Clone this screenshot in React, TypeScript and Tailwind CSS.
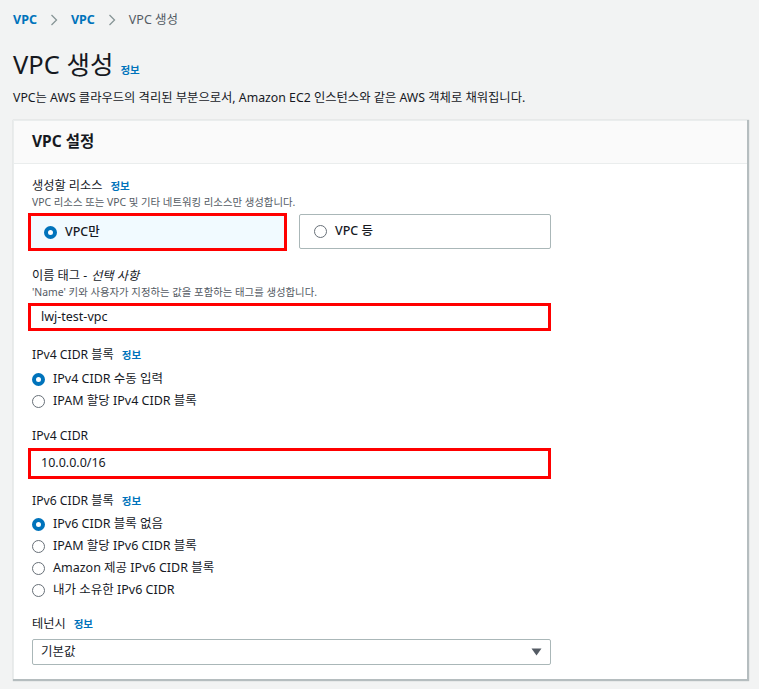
const font = { fontFamily: '"Noto Sans", "Noto Sans CJK KR", sans-serif' };

function Info() {
    return <span className="text-[#0073bb] text-[10.5px] font-bold ml-2">정보</span>;
}

function Radio({ checked }: { checked?: boolean }) {
    return checked ? (
        <span className="w-[13px] h-[13px] rounded-full border-[4px] border-[#0073bb] bg-white shrink-0" />
    ) : (
        <span className="w-[13px] h-[13px] rounded-full border border-[#687078] bg-white shrink-0" />
    );
}

function RadioRow({ label, checked }: { label: string; checked?: boolean }) {
    return (
        <div className="flex items-center gap-[8px] h-[22px] text-[12.5px] text-[#16191f]">
            <Radio checked={checked} />
            <span>{label}</span>
        </div>
    );
}

function Label({ children }: { children: React.ReactNode }) {
    return <div className="text-[12.2px] text-[#16191f] leading-[18px] flex items-center">{children}</div>;
}

function Chevron() {
    return (
        <svg className="mx-[13px]" width="8" height="12" viewBox="0 0 8 12" fill="none" stroke="#879596" strokeWidth="1.3">
            <path d="M1.5 1l5 5-5 5" />
        </svg>
    );
}

export default function App() {
    return (
        <div style={font} className="w-[759px] h-[689px] bg-[#f2f3f3] px-[13px] pt-[10px] text-[#16191f] overflow-hidden">
            {/* Breadcrumb */}
            <div className="flex items-center h-[20px] text-[12.5px]">
                <span className="text-[#0073bb] font-bold">VPC</span>
                <Chevron />
                <span className="text-[#0073bb] font-bold">VPC</span>
                <Chevron />
                <span className="text-[#545b64]">VPC 생성</span>
            </div>

            {/* Title */}
            <div className="flex items-baseline mt-[16px] h-[36px]">
                <h1 className="text-[25.5px] leading-[36px] font-normal">VPC 생성</h1>
                <span className="text-[#0073bb] text-[10.5px] font-bold ml-[7px]">정보</span>
            </div>
            <p className="mt-[6px] text-[12.3px] leading-[20px]">
                VPC는 AWS 클라우드의 격리된 부분으로서, Amazon EC2 인스턴스와 같은 AWS 객체로 채워집니다.
            </p>

            {/* Card */}
            <div className="mt-[12px] w-[734px] bg-white border-t border-l border-[#eaeded] shadow-[1px_1px_1px_1px_rgba(0,28,36,0.25)]">
                <div className="h-[43px] bg-[#fafafa] border-b border-[#eaeded] px-[18px] flex items-center">
                    <h2 className="text-[15.5px] font-bold">VPC 설정</h2>
                </div>
                <div className="px-[14px] pt-[13px] pb-[14px]">
                    <div className="pl-[4px]">
                        <Label>
                            생성할 리소스 <Info />
                        </Label>
                        <div className="text-[10.4px] text-[#545b64] leading-[15px]">VPC 리소스 또는 VPC 및 기타 네트워킹 리소스만 생성합니다.</div>
                    </div>
                    <div className="flex mt-[3px] gap-[12px]">
                        <div className="w-[259px] h-[38px] border-[3px] border-[#ff0000] bg-[#f1faff] flex items-center px-[13px] gap-[8px] text-[12.5px] font-medium">
                            <Radio checked />
                            <span>VPC만</span>
                        </div>
                        <div className="w-[252px] h-[35px] mt-[1px] border border-[#aab7b8] rounded-[2px] flex items-center px-[14px] gap-[8px] text-[12.5px] font-medium">
                            <Radio />
                            <span>VPC 등</span>
                        </div>
                    </div>

                    <div className="pl-[4px] mt-[16px]">
                        <Label>
                            이름 태그 - <i className="ml-1">선택 사항</i>
                        </Label>
                        <div className="text-[10.4px] text-[#545b64] leading-[15px]">'Name' 키와 사용자가 지정하는 값을 포함하는 태그를 생성합니다.</div>
                    </div>
                    <div className="mt-[3px] w-[523px] h-[28px] border-[3px] border-[#ff0000] flex items-center px-[10px] text-[12.5px]">lwj-test-vpc</div>

                    <div className="pl-[4px] mt-[15px]">
                        <Label>
                            IPv4 CIDR 블록 <Info />
                        </Label>
                        <div className="mt-[4px]">
                            <RadioRow label="IPv4 CIDR 수동 입력" checked />
                            <RadioRow label="IPAM 할당 IPv4 CIDR 블록" />
                        </div>
                        <div className="mt-[15px]">
                            <Label>IPv4 CIDR</Label>
                        </div>
                    </div>
                    <div className="mt-[3px] w-[523px] h-[31px] border-[3px] border-[#ff0000] flex items-center px-[10px] text-[12.5px]">10.0.0.0/16</div>

                    <div className="pl-[4px] mt-[13px]">
                        <Label>
                            IPv6 CIDR 블록 <Info />
                        </Label>
                        <div className="mt-[3px]">
                            <RadioRow label="IPv6 CIDR 블록 없음" checked />
                            <RadioRow label="IPAM 할당 IPv6 CIDR 블록" />
                            <RadioRow label="Amazon 제공 IPv6 CIDR 블록" />
                            <RadioRow label="내가 소유한 IPv6 CIDR" />
                        </div>
                        <div className="mt-[14px]">
                            <Label>
                                테넌시 <Info />
                            </Label>
                        </div>
                        <div className="mt-[6px] w-[519px] h-[26px] border border-[#aab7b8] rounded-[2px] flex items-center justify-between px-[8px] text-[12.5px]">
                            <span>기본값</span>
                            <svg width="11" height="8" viewBox="0 0 11 8">
                                <path d="M0.5 0.5h10L5.5 7.5z" fill="#545b64" />
                            </svg>
                        </div>
                    </div>
                </div>
            </div>
        </div>
    );
}
